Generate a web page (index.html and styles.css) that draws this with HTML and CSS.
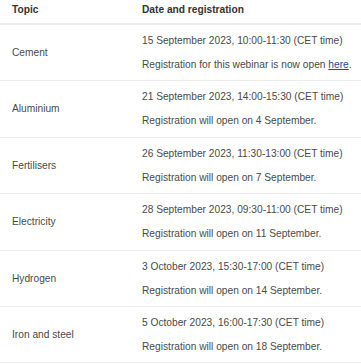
FILE: index.html
```html
<!DOCTYPE html>
<html lang="en">

<head>
    <meta charset="UTF-8">
    <meta name="viewport" content="width=device-width, initial-scale=1.0">
    <title>Webinars</title>
    <link rel="stylesheet" href="styles.css">
</head>

<body>
    <table class="webinars">
        <thead>
            <tr>
                <th class="topic">Topic</th>
                <th class="date">Date and registration</th>
            </tr>
        </thead>
        <tbody>
            <tr>
                <td class="topic">Cement</td>
                <td class="date">
                    <p>15 September 2023, 10:00-11:30 (CET time)</p>
                    <p>Registration for this webinar is now open <a href="#">here</a>.</p>
                </td>
            </tr>
            <tr>
                <td class="topic">Aluminium</td>
                <td class="date">
                    <p>21 September 2023, 14:00-15:30 (CET time)</p>
                    <p>Registration will open on 4 September.</p>
                </td>
            </tr>
            <tr>
                <td class="topic">Fertilisers</td>
                <td class="date">
                    <p>26 September 2023, 11:30-13:00 (CET time)</p>
                    <p>Registration will open on 7 September.</p>
                </td>
            </tr>
            <tr>
                <td class="topic">Electricity</td>
                <td class="date">
                    <p>28 September 2023, 09:30-11:00 (CET time)</p>
                    <p>Registration will open on 11 September.</p>
                </td>
            </tr>
            <tr>
                <td class="topic">Hydrogen</td>
                <td class="date">
                    <p>3 October 2023, 15:30-17:00 (CET time)</p>
                    <p>Registration will open on 14 September.</p>
                </td>
            </tr>
            <tr>
                <td class="topic">Iron and steel</td>
                <td class="date">
                    <p>5 October 2023, 16:00-17:30 (CET time)</p>
                    <p>Registration will open on 18 September.</p>
                </td>
            </tr>
        </tbody>
    </table>
</body>

</html>
```

FILE: styles.css
```css
/*General*/
html {
    font-family: 'Liberation Sans', Arial, sans-serif;
    font-size: 10.2px;
}

* {
    margin: 0;
    padding: 0;
}

body {
    background-color: #fff;
    color: #4a4a4a;
}

/*Table*/
.webinars {
    width: 100%;
    border-collapse: collapse;
}

.webinars th {
    text-align: left;
    font-weight: 700;
    color: #333;
    line-height: 16px;
    padding: 2px 0 5px;
    border-bottom: 2px solid #ededed;
}

.webinars td {
    vertical-align: middle;
    line-height: 16px;
    padding: 8px 0 7.4px;
    border-bottom: 1px solid #ededed;
    white-space: nowrap;
}

.webinars .topic {
    width: 130px;
    padding-left: 12px;
}

.webinars .date p + p {
    margin-top: 8px;
}

.webinars a {
    color: #1a4b9b;
}
```
